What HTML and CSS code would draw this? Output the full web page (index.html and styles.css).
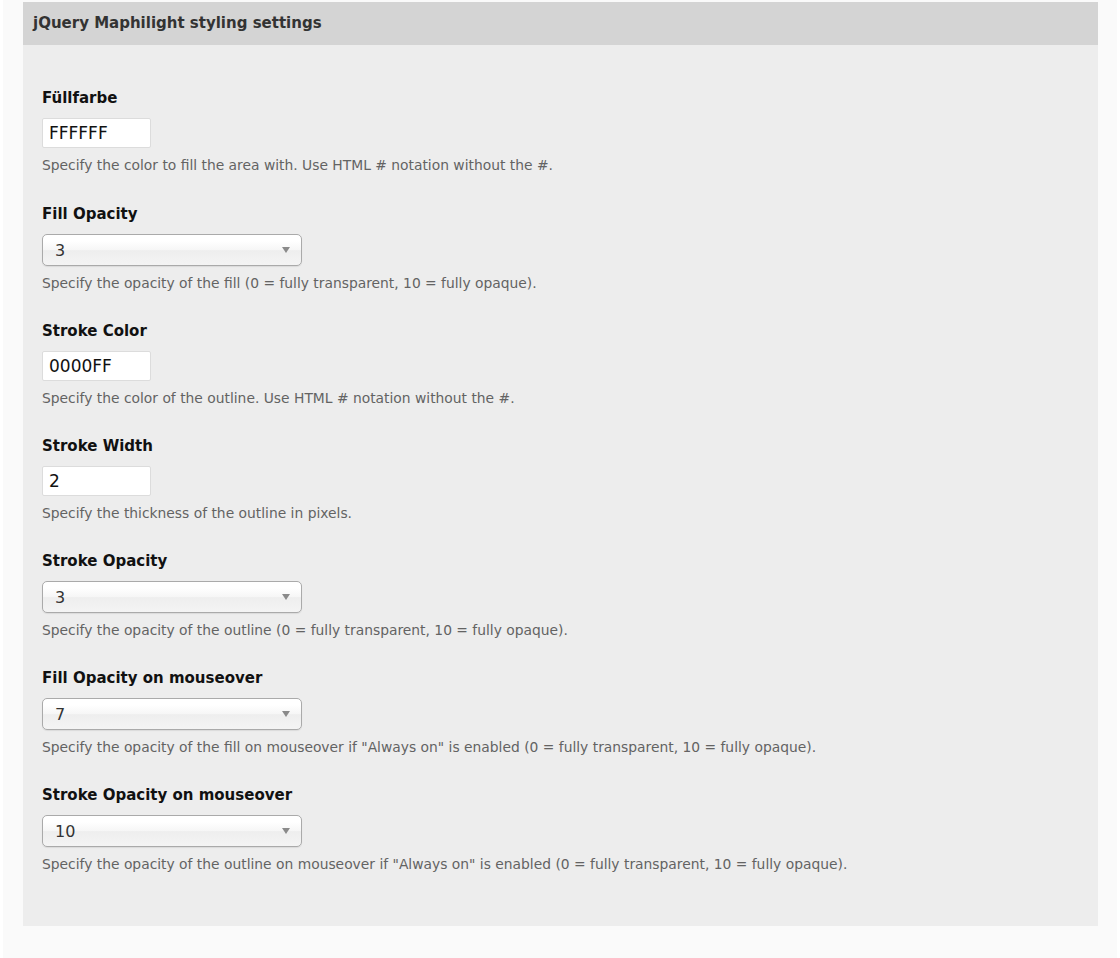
FILE: index.html
```html
<!DOCTYPE html>
<html lang="de">
<head>
<meta charset="utf-8">
<title>jQuery Maphilight styling settings</title>
<link rel="stylesheet" href="styles.css">
</head>
<body>
<div class="page">
  <section class="panel">
    <header class="panel-head">jQuery Maphilight styling settings</header>
    <div class="panel-body">
      <div class="field">
        <label class="label">Füllfarbe</label>
        <div class="text-input">FFFFFF</div>
        <p class="desc">Specify the color to fill the area with. Use HTML # notation without the #.</p>
      </div>
      <div class="field">
        <label class="label">Fill Opacity</label>
        <div class="select"><span>3</span><i class="arrow"></i></div>
        <p class="desc">Specify the opacity of the fill (0 = fully transparent, 10 = fully opaque).</p>
      </div>
      <div class="field">
        <label class="label">Stroke Color</label>
        <div class="text-input">0000FF</div>
        <p class="desc">Specify the color of the outline. Use HTML # notation without the #.</p>
      </div>
      <div class="field">
        <label class="label">Stroke Width</label>
        <div class="text-input">2</div>
        <p class="desc">Specify the thickness of the outline in pixels.</p>
      </div>
      <div class="field">
        <label class="label">Stroke Opacity</label>
        <div class="select"><span>3</span><i class="arrow"></i></div>
        <p class="desc">Specify the opacity of the outline (0 = fully transparent, 10 = fully opaque).</p>
      </div>
      <div class="field">
        <label class="label">Fill Opacity on mouseover</label>
        <div class="select"><span>7</span><i class="arrow"></i></div>
        <p class="desc">Specify the opacity of the fill on mouseover if "Always on" is enabled (0 = fully transparent, 10 = fully opaque).</p>
      </div>
      <div class="field">
        <label class="label">Stroke Opacity on mouseover</label>
        <div class="select"><span>10</span><i class="arrow"></i></div>
        <p class="desc">Specify the opacity of the outline on mouseover if "Always on" is enabled (0 = fully transparent, 10 = fully opaque).</p>
      </div>
    </div>
  </section>
</div>
</body>
</html>
```

FILE: styles.css
```css
* { box-sizing: border-box; }
html, body {
  margin: 0;
  padding: 0;
  background: #ffffff;
}
body {
  font-family: "DejaVu Sans", Verdana, sans-serif;
  color: #000;
}
.page {
  margin: 0 3px;
  background: #fafafa;
  padding: 2px 19px 33px 20px;
  min-height: 958px;
}
.panel {
  background: #ededed;
}
.panel-head {
  height: 43px;
  line-height: 43px;
  background: #d4d4d4;
  padding-left: 10px;
  font-size: 15px;
  font-weight: bold;
  color: #333;
}
.panel-body {
  padding: 43px 19px 53px 19px;
  display: flex;
  flex-direction: column;
  gap: 29px;
}
.field {
  display: flex;
  flex-direction: column;
  align-items: flex-start;
}
.field:first-child {
  margin-bottom: 1px;
}
.label {
  font-size: 15px;
  line-height: 20px;
  font-weight: bold;
  color: #111;
  margin-bottom: 10px;
}
.text-input {
  width: 109px;
  height: 30px;
  background: #fff;
  border: 1px solid #dcdcdc;
  border-radius: 2px;
  padding: 0 6px;
  font-size: 17px;
  line-height: 28px;
  color: #111;
}
.select {
  width: 260px;
  height: 32px;
  border: 1px solid #aaa;
  border-radius: 5px;
  background: linear-gradient(#fff 20%, #f6f6f6 50%, #eee 52%, #f4f4f4 100%);
  box-shadow: 0 1px 1px rgba(0,0,0,0.08);
  display: flex;
  align-items: center;
  justify-content: space-between;
  padding: 0 11px 0 12px;
  font-size: 16px;
  color: #333;
}
.arrow {
  width: 0;
  height: 0;
  border-left: 4px solid transparent;
  border-right: 4px solid transparent;
  border-top: 6px solid #8a8a8a;
}
.desc {
  margin: 8px 0 0;
  font-size: 13.85px;
  line-height: 18px;
  color: #636363;
}
```
